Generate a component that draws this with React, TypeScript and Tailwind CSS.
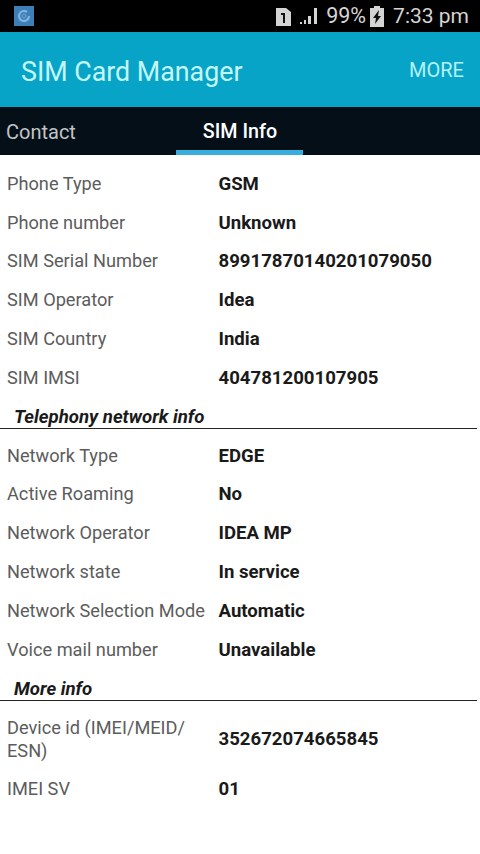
import React from 'react';

const simRows = [
    { label: 'Phone Type', value: 'GSM' },
    { label: 'Phone number', value: 'Unknown' },
    { label: 'SIM Serial Number', value: '89917870140201079050' },
    { label: 'SIM Operator', value: 'Idea' },
    { label: 'SIM Country', value: 'India' },
    { label: 'SIM IMSI', value: '404781200107905' },
];

const networkRows = [
    { label: 'Network Type', value: 'EDGE' },
    { label: 'Active Roaming', value: 'No' },
    { label: 'Network Operator', value: 'IDEA MP' },
    { label: 'Network state', value: 'In service' },
    { label: 'Network Selection Mode', value: 'Automatic' },
    { label: 'Voice mail number', value: 'Unavailable' },
];

const Row = ({ label, value }: { label: string; value: string }) => (
    <div className="flex items-center h-[38.8px] pl-[7px]">
        <div className="w-[211.5px] shrink-0 text-[18.2px] leading-[23px] text-[#5c5c5c]">{label}</div>
        <div className="pt-[2px] text-[18.6px] leading-[23px] font-bold text-[#1a1a1a]">{value}</div>
    </div>
);

const SectionHeader = ({ title }: { title: string }) => (
    <div className="h-[33px] mr-[3px] flex items-end pl-[14px] border-b border-[#222222] mt-[-1px]">
        <span className="text-[18.6px] leading-[22px] font-bold italic text-[#1a1a1a]">{title}</span>
    </div>
);

const App: React.FC = () => {
    return (
        <div className="w-[480px] h-[854px] bg-white overflow-hidden font-['Roboto',sans-serif]">
            {/* Status bar */}
            <div className="h-[32px] bg-black flex items-center pl-[14px] pr-[11px]">
                <div className="w-[20px] h-[20px] bg-[#3f7fb8] flex items-center justify-center">
                    <svg width="14" height="14" viewBox="0 0 14 14" fill="none">
                        <path d="M12 7a5 5 0 1 1-2-4" stroke="#86b8e0" strokeWidth="2" />
                        <circle cx="7" cy="7" r="2" stroke="#6ea6d4" strokeWidth="1" />
                    </svg>
                </div>
                <div className="ml-auto flex items-center text-[#d4d4d4]">
                    <svg width="15" height="19" viewBox="0 0 15 19" className="mr-[9px]">
                        <path d="M0 1h10l5 4v14H0z" fill="#d4d4d4" />
                        <path d="M5 6h4v10H7V8H5z" fill="#111" />
                    </svg>
                    <svg width="18" height="17" viewBox="0 0 18 17" className="mr-[8px]">
                        <rect x="0" y="14" width="2" height="2" fill="#d4d4d4" />
                        <rect x="4" y="12" width="2" height="4" fill="#d4d4d4" />
                        <rect x="8" y="8" width="3" height="8" fill="#d4d4d4" />
                        <rect x="14" y="0" width="3" height="16" fill="#d4d4d4" />
                    </svg>
                    <span className="text-[21.5px] leading-none">99%</span>
                    <svg width="14" height="21" viewBox="0 0 14 21" className="ml-[4px] mr-[9px]">
                        <path d="M4 0h6v2h4v19H0V2h4z" fill="#d4d4d4" />
                        <path d="M9 4L3 12h3l-1 6 6-8H8z" fill="#111" />
                    </svg>
                    <span className="text-[21px] leading-none">7:33 pm</span>
                </div>
            </div>

            {/* App bar */}
            <div className="h-[75px] bg-[#07a4c7] flex items-center justify-between pl-[21px] pr-[16px]">
                <span className="text-[26.8px] text-[#c4f6f6] mt-[5px]">SIM Card Manager</span>
                <span className="text-[20px] text-[#b4f2f6]">MORE</span>
            </div>

            {/* Tabs */}
            <div className="h-[48px] bg-[#040f18] flex">
                <div className="w-[176px] pl-[6px] pt-[10px] text-[20px] text-[#c0c4c6]">Contact</div>
                <div className="w-[127px] pt-[10px] pl-[1px] text-center text-[19.7px] font-medium text-white border-b-[5px] border-[#37aedb]">SIM Info</div>
            </div>

            {/* Info list */}
            <div className="pt-[9px]">
                {simRows.map((row, index) => (
                    <Row key={index} label={row.label} value={row.value} />
                ))}
                <SectionHeader title="Telephony network info" />
                <div className="pt-[7px]">
                    {networkRows.map((row, index) => (
                        <Row key={index} label={row.label} value={row.value} />
                    ))}
                </div>
                <SectionHeader title="More info" />
                <div className="pt-[8px]">
                    <div className="flex items-center h-[61px] pl-[7px]">
                        <div className="w-[211.5px] shrink-0 text-[18.2px] leading-[23px] text-[#5c5c5c]">Device id (IMEI/MEID/<br />ESN)</div>
                        <div className="text-[18.6px] leading-[23px] font-bold text-[#1a1a1a]">352672074665845</div>
                    </div>
                    <Row label="IMEI SV" value="01" />
                </div>
            </div>
        </div>
    );
};

export default App;
